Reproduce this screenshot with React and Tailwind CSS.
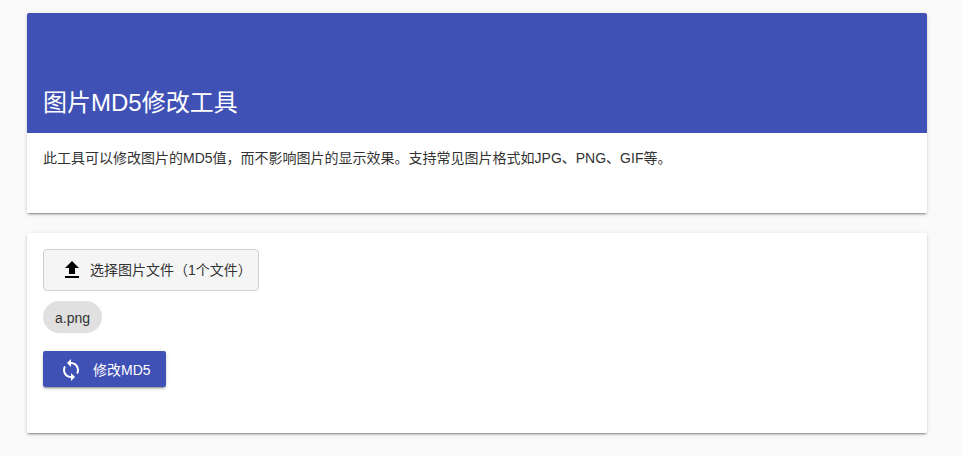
function UploadIcon() {
  return (
    <svg viewBox="0 0 24 24" className="w-6 h-6 fill-black">
      <path d="M9 16h6v-6h4l-7-7-7 7h4zm-4 2h14v2H5z" />
    </svg>
  );
}

function SyncIcon() {
  return (
    <svg viewBox="0 0 24 24" className="w-6 h-6 fill-white">
      <path d="M12 4V1L8 5l4 4V6c3.31 0 6 2.69 6 6 0 1.01-.25 1.97-.7 2.8l1.46 1.46C19.54 15.03 20 13.57 20 12c0-4.42-3.58-8-8-8zm0 14c-3.31 0-6-2.69-6-6 0-1.01.25-1.97.7-2.8L5.24 7.74C4.46 8.97 4 10.43 4 12c0 4.42 3.58 8 8 8v3l4-4-4-4v3z" />
    </svg>
  );
}

const cardShadow = "shadow-[0_2px_2px_0_rgba(0,0,0,0.14),0_3px_1px_-2px_rgba(0,0,0,0.2),0_1px_5px_0_rgba(0,0,0,0.12)]";

export default function App() {
  return (
    <div className="min-h-[456px] bg-[#fafafa] pt-[13px] font-['Liberation_Sans','Noto_Sans_CJK_SC',sans-serif] text-[#333333]">
      <div className="w-[900px] ml-[27px] flex flex-col gap-5">
        <div className={`h-[200px] rounded-[2px] bg-white overflow-hidden ${cardShadow}`}>
          <div className="h-[120px] bg-[#3f51b5] flex items-end px-4 pb-4">
            <h1 className="text-2xl leading-7 text-white">图片MD5修改工具</h1>
          </div>
          <p className="px-4 pt-[15px] text-sm leading-5">
            此工具可以修改图片的MD5值，而不影响图片的显示效果。支持常见图片格式如JPG、PNG、GIF等。
          </p>
        </div>

        <div className={`h-[200px] rounded-[2px] bg-white p-4 flex flex-col items-start ${cardShadow}`}>
          <button className="w-[216px] h-[42px] flex items-center pl-[16px] rounded-[4px] border border-[#cfcfcf] bg-[#f5f5f5] text-sm">
            <UploadIcon />
            <span className="ml-[6px]">选择图片文件（1个文件）</span>
          </button>
          <div className="mt-[10px] h-8 px-3 pt-0.5 flex items-center rounded-2xl bg-[#e0e0e0] text-sm">
            a.png
          </div>
          <button className={`mt-[18px] w-[123px] h-9 flex items-center pl-4 pt-0.5 rounded-[2px] bg-[#3f51b5] text-sm text-white ${cardShadow}`}>
            <SyncIcon />
            <span className="ml-[10px]">修改MD5</span>
          </button>
        </div>
      </div>
    </div>
  );
}
